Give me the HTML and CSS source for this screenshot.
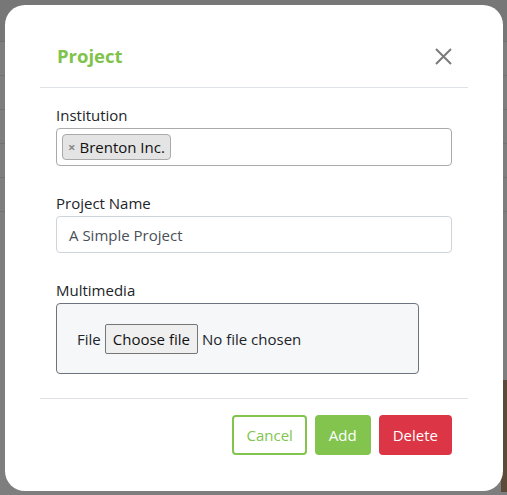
FILE: index.html
```html
<!DOCTYPE html>
<html lang="en">
<head>
<meta charset="utf-8">
<title>Project</title>
<link rel="stylesheet" href="styles.css">
</head>
<body>
<div class="backdrop">
  <div class="bg-row bg-top"></div>
  <div class="bg-row"></div>
  <div class="bg-row"></div>
  <div class="bg-row"></div>
  <div class="bg-row"></div>
  <div class="bg-row"></div>
  <div class="bg-photo"></div>
</div>
<div class="modal">
  <div class="modal-header">
    <h5 class="modal-title">Project</h5>
    <button class="close" aria-label="Close">
      <svg width="17" height="17" viewBox="0 0 17 17"><path d="M1 1 L16 16 M16 1 L1 16" stroke="#7b7b7b" stroke-width="2" fill="none"/></svg>
    </button>
  </div>
  <div class="modal-body">
    <div class="form-group">
      <label class="label">Institution</label>
      <div class="select-box">
        <span class="tag"><span class="tag-x">×</span>Brenton Inc.</span>
      </div>
    </div>
    <div class="form-group">
      <label class="label">Project Name</label>
      <div class="text-input">A Simple Project</div>
    </div>
    <div class="form-group last">
      <label class="label">Multimedia</label>
      <div class="file-box">
        <span class="file-label">File</span>
        <span class="file-btn">Choose file</span>
        <span class="file-none">No file chosen</span>
      </div>
    </div>
  </div>
  <div class="modal-footer">
    <button class="btn btn-outline">Cancel</button>
    <button class="btn btn-green">Add</button>
    <button class="btn btn-red">Delete</button>
  </div>
</div>
</body>
</html>
```
FILE: styles.css
```css
* { box-sizing: border-box; }
html, body { margin: 0; padding: 0; }
body {
  width: 507px;
  height: 495px;
  background: #7e7e7e;
  font-family: "Open Sans", "Noto Sans", sans-serif;
  font-size: 15px;
  color: #212529;
  position: relative;
  overflow: hidden;
}
.backdrop {
  position: absolute;
  inset: 0;
  display: flex;
  flex-direction: column;
}
.bg-row {
  height: 34px;
  border-bottom: 1px solid #727272;
}
.bg-top { height: 42px; background: #777; border-bottom: 1px solid #6f6f6f; }
.bg-photo {
  position: absolute;
  right: 0;
  top: 380px;
  width: 6px;
  height: 112px;
  background: #5e4a38;
}
.modal {
  position: absolute;
  left: 5px;
  top: 5px;
  width: 498px;
  height: 486px;
  background: #fff;
  border-radius: 20px;
  padding: 0 35px;
  display: flex;
  flex-direction: column;
}
.modal-header {
  display: flex;
  align-items: center;
  justify-content: space-between;
  padding: 36px 16px 16px 17px;
  border-bottom: 1px solid #dee2e6;
}
.modal-title {
  margin: 0;
  font-size: 18.5px;
  line-height: 30px;
  font-weight: 700;
  color: #7fc34c;
}
.close {
  border: 0;
  background: none;
  padding: 0;
  width: 17px;
  height: 17px;
  display: flex;
  margin-top: 1px;
}
.modal-body {
  padding: 16px 16px 24px 16px;
  border-bottom: 1px solid #dee2e6;
}
.form-group { margin-bottom: 26px; }
.form-group.last { margin-bottom: 0; }
.label {
  display: block;
  line-height: 23px;
  margin-bottom: 1px;
  color: #212529;
}
.select-box {
  height: 38px;
  border: 1px solid #aaa;
  border-radius: 4px;
  padding: 5px 5px;
  display: flex;
  align-items: center;
}
.tag {
  display: inline-flex;
  align-items: center;
  height: 26px;
  padding: 0 5px 0 5px;
  background: #e4e4e4;
  border: 1px solid #aaa;
  border-radius: 4px;
  color: #111;
}
.tag-x {
  color: #888;
  font-weight: 700;
  font-size: 13px;
  margin-right: 4px;
}
.text-input {
  height: 37px;
  border: 1px solid #ced4da;
  border-radius: 4px;
  padding: 0 12px;
  display: flex;
  align-items: center;
  color: #495057;
}
.file-box {
  width: 363px;
  height: 71px;
  background: #f6f7f9;
  border: 1px solid #6c757d;
  border-radius: 4px;
  padding: 0 20px;
  display: flex;
  align-items: center;
  color: #212529;
}
.file-label { margin-right: 4px; }
.file-btn {
  display: inline-flex;
  align-items: center;
  height: 30px;
  padding: 0 7px;
  background: #efefef;
  border: 1px solid #767676;
  border-radius: 2px;
  margin-right: 4px;
  color: #111;
}
.modal-footer {
  display: flex;
  justify-content: flex-end;
  gap: 8px;
  padding: 16px 16px 0 16px;
}
.btn {
  height: 40px;
  border-radius: 4px;
  font-family: inherit;
  font-size: 15px;
  padding: 0 12px;
  border: 2px solid transparent;
  cursor: pointer;
}
.btn-outline {
  background: #fff;
  border-color: #82c44e;
  color: #82c44e;
}
.btn-green {
  background: #82c44e;
  border-color: #82c44e;
  color: #fff;
}
.btn-red {
  background: #dc3545;
  border-color: #dc3545;
  color: #fff;
}
```
